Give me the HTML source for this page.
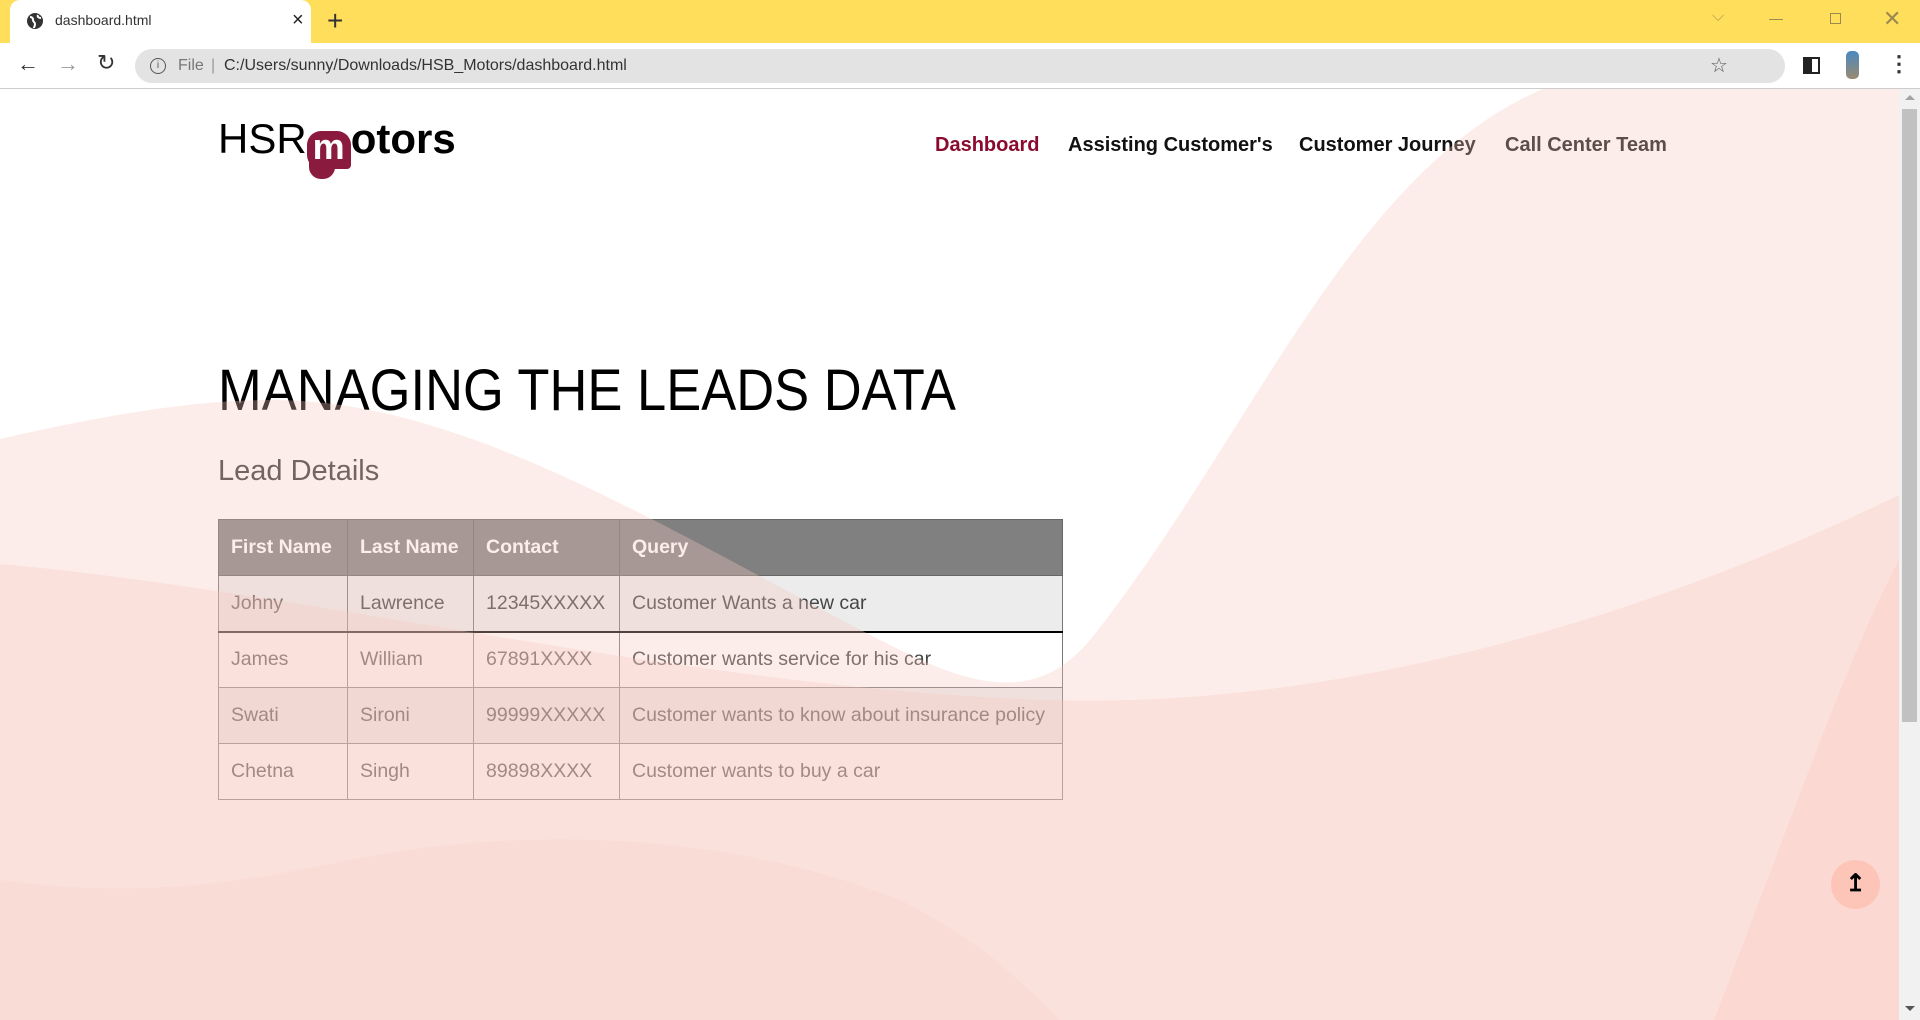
<!DOCTYPE html>
<html><head><meta charset="utf-8"><style>
*{margin:0;padding:0;box-sizing:border-box}
body{width:1920px;height:1020px;overflow:hidden;font-family:"Liberation Sans",Arial,sans-serif;background:#fff;position:relative}
.tabbar{position:absolute;left:0;top:0;width:1920px;height:43px;background:#ffde5c}
.tab{position:absolute;left:10px;top:0;width:301px;height:43px;background:#fff;border-radius:10px 10px 0 0;font-size:14px;color:#333}
.addr{position:absolute;left:0;top:43px;width:1920px;height:46px;background:#fff;border-bottom:1px solid #ccc}
.omni{position:absolute;left:135px;top:6px;width:1650px;height:34px;background:#e3e3e3;border-radius:17px;font-size:16px;color:#333;line-height:34px}
.page{position:absolute;left:0;top:89px;width:1899px;height:931px;background:#fff;overflow:hidden}
.sb{position:absolute;left:1899px;top:89px;width:21px;height:931px;background:#f1f1f1}
.logo{position:absolute;left:218px;top:26px;font-size:42px;height:60px;white-space:nowrap}
.nav{position:absolute;top:45px;font-size:20px;font-weight:bold;color:#111}
h1{position:absolute;left:218px;top:268px;font-size:58px;font-weight:normal;color:#000;transform:scaleX(0.905);transform-origin:0 0;white-space:nowrap}
h2{position:absolute;left:218px;top:366px;font-size:29px;font-weight:normal;color:#333}
table{position:absolute;left:218px;top:430px;border-collapse:collapse;font-size:19.5px;border:1.5px solid #333}
th{background:#808080;color:#fff;text-align:left;height:56px;padding:0 12px;border:1px solid #666;font-weight:bold}
td{height:56px;padding:0 12px;border:1px solid #777;color:#444}
tr.o td{background:#ececec}
tr.first td{border-bottom:2px solid #000}
svg.ov{position:absolute;left:0;top:0;pointer-events:none}
</style></head><body>
<div class="tabbar">
 <div class="tab">
  <svg style="position:absolute;left:16px;top:12px" width="18" height="18" viewBox="0 0 18 18"><circle cx="9" cy="9" r="8" fill="#333"/><path d="M4 5c2 0 3 1 3 3s2 2 2 4-1 3-1 4M12 3c-1 2 1 3 3 3" stroke="#fff" stroke-width="2" fill="none"/></svg>
  <span style="position:absolute;left:45px;top:12px">dashboard.html</span>
  <span style="position:absolute;left:282px;top:9px;font-size:20px;color:#222">×</span>
 </div>
 <span style="position:absolute;left:327px;top:5px;font-size:28px;color:#333">+</span>
 <span style="position:absolute;left:1712px;top:8px;font-size:16px;color:#bba050">⌵</span>
 <div style="position:absolute;left:1769px;top:19px;width:14px;height:1px;background:#9a8a50"></div>
 <div style="position:absolute;left:1830px;top:13px;width:11px;height:11px;border:1px solid #9a8a50"></div>
 <span style="position:absolute;left:1883px;top:6px;font-size:22px;color:#9a8a50">✕</span>
</div>
<div class="addr">
 <span style="position:absolute;left:17px;top:8px;font-size:22px;color:#333">←</span>
 <span style="position:absolute;left:57px;top:8px;font-size:22px;color:#999">→</span>
 <span style="position:absolute;left:97px;top:7px;font-size:22px;color:#333">↻</span>
 <div class="omni">
  <span style="position:absolute;left:15px;top:9px;width:16px;height:16px;border:1.5px solid #555;border-radius:50%;font-size:10px;line-height:13px;text-align:center;color:#555">i</span>
  <span style="position:absolute;left:43px;color:#777">File</span>
  <span style="position:absolute;left:76px;color:#999">|</span>
  <span style="position:absolute;left:89px">C:/Users/sunny/Downloads/HSB_Motors/dashboard.html</span>
  <span style="position:absolute;left:1575px;font-size:20px;color:#555">☆</span>
 </div>
 <div style="position:absolute;left:1803px;top:14px;width:17px;height:17px;border:2px solid #222;border-left-width:9px"></div>
 <div style="position:absolute;left:1846px;top:8px;width:13px;height:28px;border-radius:5px;background:linear-gradient(#4a8ac0,#9a8a70)"></div>
 <span style="position:absolute;left:1888px;top:8px;font-size:22px;font-weight:bold;color:#333">⋮</span>
</div>
<div class="page">
 <div class="logo"><span style="color:#000">HSR</span><span style="display:inline-block;position:relative;width:44px;height:38px;background:#8b1a3f;border-radius:14px 14px 4px 14px;color:#fff;font-weight:bold;text-align:center;line-height:32px;vertical-align:-6px;font-size:36px">m<span style="position:absolute;left:2px;top:30px;width:26px;height:18px;background:#8b1a3f;border-radius:0 0 12px 12px"></span></span><span style="font-weight:bold">otors</span></div>
 <div class="nav" style="left:935px;color:#8b0a30">Dashboard</div>
 <div class="nav" style="left:1068px">Assisting Customer's</div>
 <div class="nav" style="left:1299px">Customer Journey</div>
 <div class="nav" style="left:1505px">Call Center Team</div>
 <h1>MANAGING THE LEADS DATA</h1>
 <h2>Lead Details</h2>
 <table>
  <tr><th style="width:129px">First Name</th><th style="width:126px">Last Name</th><th style="width:146px">Contact</th><th style="width:443px">Query</th></tr>
  <tr class="o first"><td>Johny</td><td>Lawrence</td><td>12345XXXXX</td><td>Customer Wants a new car</td></tr>
  <tr><td>James</td><td>William</td><td>67891XXXX</td><td>Customer wants service for his car</td></tr>
  <tr class="o"><td>Swati</td><td>Sironi</td><td>99999XXXXX</td><td>Customer wants to know about insurance policy</td></tr>
  <tr><td>Chetna</td><td>Singh</td><td>89898XXXX</td><td>Customer wants to buy a car</td></tr>
 </table>
 <svg class="ov" width="1899" height="931" viewBox="0 89 1899 931">
  <path d="M0,439 C150,405 250,392 340,405 C520,430 720,560 900,650 C980,690 1040,700 1090,640 C1250,440 1350,170 1545,88 L1899,88 L1899,1020 L0,1020 Z" fill="rgba(250,200,190,0.33)"/>
  <path d="M0,564 C300,590 700,690 1050,700 C1300,708 1600,640 1899,495 L1899,1020 L0,1020 Z" fill="rgba(250,200,190,0.3)"/>
  <path d="M1714,1020 C1780,850 1850,650 1899,560 L1899,1020 Z" fill="rgba(250,190,180,0.25)"/>
  <path d="M0,1020 L0,880 C150,900 250,880 350,860 C550,820 750,840 900,900 C980,940 1020,980 1060,1020 Z" fill="rgba(250,190,180,0.12)"/>
 </svg>
 <div style="position:absolute;left:1831px;top:771px;width:49px;height:49px;border-radius:50%;background:#fcc5b8;text-align:center;font-size:24px;font-weight:bold;line-height:48px;color:#000">↥</div>
</div>
<div class="sb">
 <div style="position:absolute;left:3px;top:20px;width:15px;height:613px;background:#c1c1c1"></div>
 <div style="position:absolute;left:6px;top:6px;border:5px solid transparent;border-bottom-color:#a3a3a3;border-top:0"></div>
 <div style="position:absolute;left:6px;top:917px;border:5px solid transparent;border-top-color:#555;border-bottom:0"></div>
</div>
</body></html>
